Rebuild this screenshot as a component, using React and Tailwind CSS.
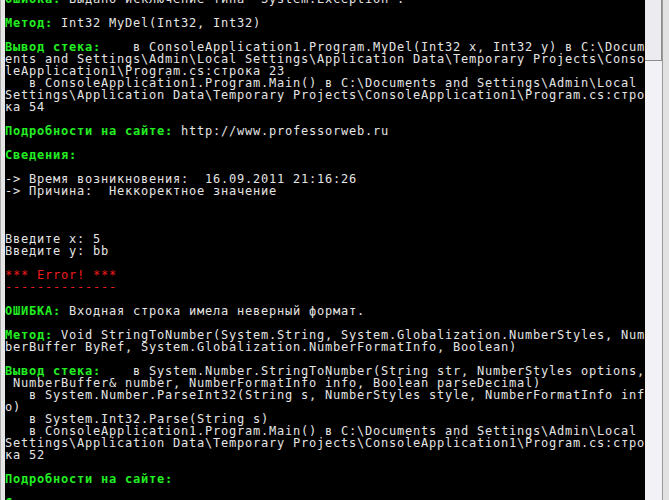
import React from "react";

const G = "text-[#22ee22] font-bold";
const W = "text-[#e4e4e4]";
const R = "text-[#f01c1c]";

const rows = [
  [[G, "Ошибка:"], [W, ' Выдано исключение типа "System.Exception".']],
  [],
  [[G, "Метод:"], [W, " Int32 MyDel(Int32, Int32)"]],
  [],
  [[G, "Вывод стека:"], [W, "    в ConsoleApplication1.Program.MyDel(Int32 x, Int32 y) в C:\\Docum"]],
  [[W, "ents and Settings\\Admin\\Local Settings\\Application Data\\Temporary Projects\\Conso"]],
  [[W, "leApplication1\\Program.cs:строка 23"]],
  [[W, "   в ConsoleApplication1.Program.Main() в C:\\Documents and Settings\\Admin\\Local "]],
  [[W, "Settings\\Application Data\\Temporary Projects\\ConsoleApplication1\\Program.cs:стро"]],
  [[W, "ка 54"]],
  [],
  [[G, "Подробности на сайте:"], [W, " http://www.professorweb.ru"]],
  [],
  [[G, "Сведения:"]],
  [],
  [[W, "-> Время возникновения:  16.09.2011 21:16:26"]],
  [[W, "-> Причина:  Неккоректное значение"]],
  [],
  [],
  [],
  [[W, "Введите x: 5"]],
  [[W, "Введите y: bb"]],
  [],
  [[R, "*** Error! ***"]],
  [[R, "--------------"]],
  [],
  [[G, "ОШИБКА:"], [W, " Входная строка имела неверный формат."]],
  [],
  [[G, "Метод:"], [W, " Void StringToNumber(System.String, System.Globalization.NumberStyles, Num"]],
  [[W, "berBuffer ByRef, System.Globalization.NumberFormatInfo, Boolean)"]],
  [],
  [[G, "Вывод стека:"], [W, "    в System.Number.StringToNumber(String str, NumberStyles options,"]],
  [[W, " NumberBuffer& number, NumberFormatInfo info, Boolean parseDecimal)"]],
  [[W, "   в System.Number.ParseInt32(String s, NumberStyles style, NumberFormatInfo inf"]],
  [[W, "o)"]],
  [[W, "   в System.Int32.Parse(String s)"]],
  [[W, "   в ConsoleApplication1.Program.Main() в C:\\Documents and Settings\\Admin\\Local "]],
  [[W, "Settings\\Application Data\\Temporary Projects\\ConsoleApplication1\\Program.cs:стро"]],
  [[W, "ка 52"]],
  [],
  [[G, "Подробности на сайте:"]],
  [],
  [[G, "Сведения:"]],
];

export default function App() {
  return (
    <div className="flex h-[500px] w-[669px] overflow-hidden bg-[#d4d0c8]">
      <div className="flex w-[5px] shrink-0">
        <div className="w-[1px] bg-[#a8a8a8]" />
        <div className="flex-1 bg-[#e6e6e6]" />
      </div>
      <div className="w-[640px] shrink-0 overflow-hidden bg-black">
        <div
          className="mt-[-7px] whitespace-pre text-[12px] leading-[12px] tracking-[0.775px]"
          style={{ fontFamily: '"DejaVu Sans Mono", monospace' }}
        >
          {rows.map((r, i) => (
            <div key={i} className="h-[12px]">
              {r.map(([c, t], j) => (
                <span key={j} className={c}>
                  {t}
                </span>
              ))}
            </div>
          ))}
        </div>
      </div>
      <div className="flex w-[17px] shrink-0 flex-col bg-[#f2f1f5]">
        <div className="h-[61px] border-b border-r border-[#8c8c8c] bg-[#ecebf0]" />
        <div className="flex-1" />
      </div>
      <div className="flex w-[7px] shrink-0">
        <div className="w-[1px] bg-[#9a9a9a]" />
        <div className="flex-1 bg-[#e2e2e2]" />
      </div>
    </div>
  );
}
